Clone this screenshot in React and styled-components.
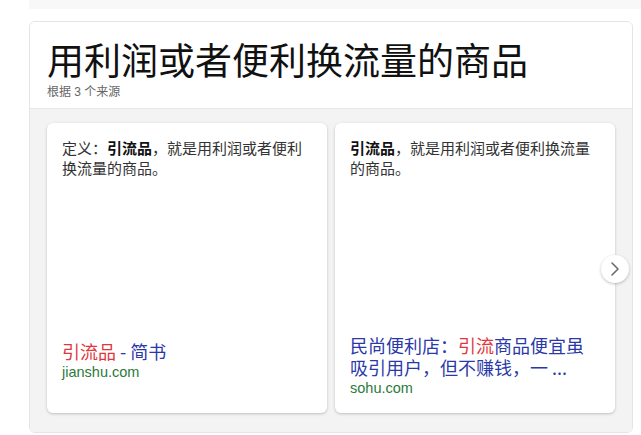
import React from 'react';
import styled, { createGlobalStyle } from 'styled-components';

const GlobalStyle = createGlobalStyle`
    body {
        margin: 0;
        background: #fff;
        font-family: "Liberation Sans", "Noto Sans CJK SC", sans-serif;
    }
`

const Page = styled.div`
    width: 641px;
    height: 435px;
    overflow: hidden;
`

const TopStrip = styled.div`
    height: 9px;
    margin-left: 29px;
    background: #f8f8f8;
`

const Panel = styled.div`
    margin: 12px 0 0 29px;
    width: 604px;
    box-sizing: border-box;
    border: 1px solid #e4e4e4;
    border-radius: 6px;
    overflow: hidden;
`

const Header = styled.div`
    background: #fff;
    padding: 17px 18px 8px 17px;
    border-bottom: 1px solid #e6e6e6;
`

const Title = styled.h1`
    margin: 0;
    font-size: 37px;
    line-height: 41px;
    font-weight: 400;
    color: #111;
    font-family: "Noto Sans CJK SC", sans-serif;
`

const Sources = styled.div`
    margin-top: 4px;
    font-size: 12px;
    line-height: 16px;
    color: #666;
`

const Body = styled.div`
    position: relative;
    background: #f3f3f3;
    padding: 14px 17px 19px;
`

const Track = styled.div`
    display: flex;
    gap: 8px;
`

const Card = styled.div`
    flex: 0 0 280px;
    height: 290px;
    box-sizing: border-box;
    padding: 15px;
    background: #fff;
    border-radius: 6px;
    box-shadow: 0 1px 3px rgba(0, 0, 0, 0.22);
    display: flex;
    flex-direction: column;
`

const Snippet = styled.div`
    height: 202px;
    font-family: "Noto Sans CJK SC", sans-serif;
    font-size: 15px;
    line-height: 20px;
    color: #333;

    b {
        color: #111;
        font-weight: 700;
    }
`

const LinkTitle = styled.div`
    font-family: "Noto Sans CJK SC", sans-serif;
    font-size: 18px;
    line-height: 22px;
    color: #2b39a8;
`

const Hit = styled.span`
    color: #e0363c;
`

const Domain = styled.div`
    font-size: 14.5px;
    line-height: 20px;
    color: #2b7a3b;
`

const NextButton = styled.div`
    position: absolute;
    left: 571px;
    top: 146px;
    width: 28px;
    height: 28px;
    border-radius: 50%;
    background: #fff;
    box-shadow: 0 1px 3px rgba(0, 0, 0, 0.25);
    display: flex;
    align-items: center;
    justify-content: center;
`

export default function App() {
    return (
        <Page>
            <GlobalStyle />
            <TopStrip />
            <Panel>
                <Header>
                    <Title>用利润或者便利换流量的商品</Title>
                    <Sources>根据 3 个来源</Sources>
                </Header>
                <Body>
                    <Track>
                        <Card>
                            <Snippet>定义：<b>引流品</b>，就是用利润或者便利换流量的商品。</Snippet>
                            <LinkTitle><Hit>引流品</Hit> - 简书</LinkTitle>
                            <Domain>jianshu.com</Domain>
                        </Card>
                        <Card>
                            <Snippet><b>引流品</b>，就是用利润或者便利换流量的商品。</Snippet>
                            <LinkTitle>民尚便利店：<Hit>引流</Hit>商品便宜虽吸引用户，但不赚钱，一 ...</LinkTitle>
                            <Domain>sohu.com</Domain>
                        </Card>
                    </Track>
                    <NextButton>
                        <svg width="10" height="16" viewBox="0 0 10 16">
                            <path d="M2 2 L8 8 L2 14" fill="none" stroke="#6b6b6b" strokeWidth="1.6" strokeLinecap="round" strokeLinejoin="round" />
                        </svg>
                    </NextButton>
                </Body>
            </Panel>
        </Page>
    );
}
